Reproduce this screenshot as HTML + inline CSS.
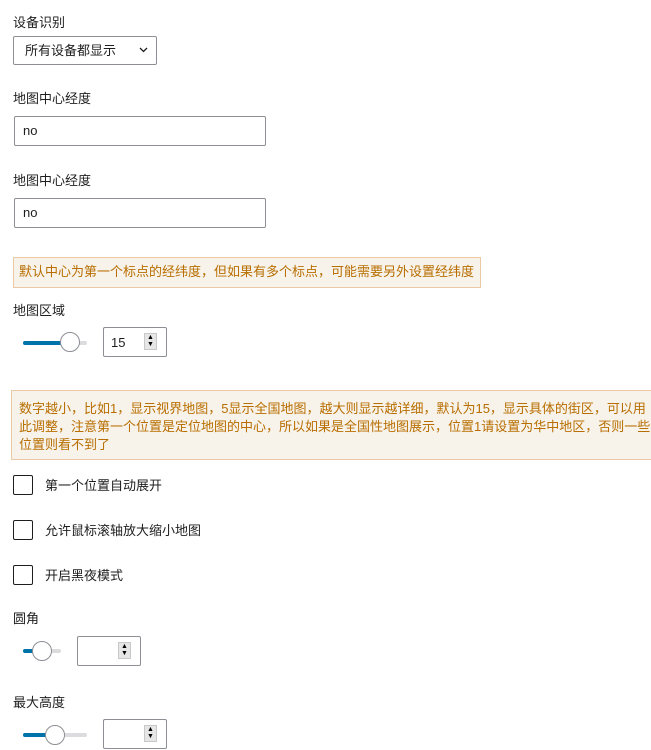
<!DOCTYPE html>
<html><head><meta charset="utf-8"><style>
body{margin:0;width:651px;height:750px;background:#fff;position:relative;overflow:hidden;font-family:"Liberation Sans","Noto Sans CJK SC",sans-serif;font-size:13px;color:#1e1e1e}
.a{position:absolute;white-space:nowrap;line-height:16px}
.box{position:absolute;border:1px solid #8c8f94;border-radius:2px;box-sizing:border-box;background:#fff}
.note{position:absolute;background:#f7f2ea;border:1px solid #ebc9a5;box-sizing:border-box;color:#b86e00;font-size:13px;line-height:18px}
.cb{position:absolute;width:20px;height:20px;border:1.5px solid #1e1e1e;border-radius:2px;box-sizing:border-box}
.track{position:absolute;height:4px;background:#dcdcde;border-radius:2px}
.fill{position:absolute;height:4px;background:#0073aa;border-radius:2px}
.thumb{position:absolute;width:20px;height:20px;border:1.5px solid #8c8f94;border-radius:50%;background:#fff;box-sizing:border-box}
.spin{position:absolute;width:13px;height:17px;background:#e6e6e6;border:1px solid #c8c8c8;box-sizing:border-box;font-size:7px;line-height:7px;text-align:center;color:#000}
</style></head><body>
<div class="a" style="left:13px;top:15px">设备识别</div>
<div class="box" style="left:13px;top:36px;width:144px;height:29px"></div>
<div class="a" style="left:25px;top:43px">所有设备都显示</div>
<svg style="position:absolute;left:139px;top:47px" width="9" height="6"><path d="M1 1 L4.5 4.5 L8 1" stroke="#1e1e1e" stroke-width="1.3" fill="none"/></svg>

<div class="a" style="left:13px;top:91px">地图中心经度</div>
<div class="box" style="left:14px;top:116px;width:252px;height:30px"></div>
<div class="a" style="left:23px;top:123px">no</div>

<div class="a" style="left:13px;top:173px">地图中心经度</div>
<div class="box" style="left:14px;top:198px;width:252px;height:30px"></div>
<div class="a" style="left:23px;top:205px">no</div>

<div class="note" style="left:13px;top:257px;width:468px;height:31px;padding:5px 0 0 5px">默认中心为第一个标点的经纬度，但如果有多个标点，可能需要另外设置经纬度</div>

<div class="a" style="left:13px;top:303px">地图区域</div>
<div class="track" style="left:23px;top:341px;width:64px"></div>
<div class="fill" style="left:23px;top:341px;width:40px"></div>
<div class="thumb" style="left:60px;top:332px"></div>
<div class="box" style="left:103px;top:327px;width:64px;height:30px"></div>
<div class="a" style="left:111px;top:335px">15</div>
<div class="spin" style="left:144px;top:333px">▲<br>▼</div>

<div class="note" style="left:11px;top:390px;width:645px;height:70px;padding:9px 0 0 7px;white-space:normal">数字越小，比如1，显示视界地图，5显示全国地图，越大则显示越详细，默认为15，显示具体的街区，可以用<br>此调整，注意第一个位置是定位地图的中心，所以如果是全国性地图展示，位置1请设置为华中地区，否则一些<br>位置则看不到了</div>

<div class="cb" style="left:13px;top:475px"></div>
<div class="a" style="left:45px;top:478px">第一个位置自动展开</div>
<div class="cb" style="left:13px;top:520px"></div>
<div class="a" style="left:45px;top:523px">允许鼠标滚轴放大缩小地图</div>
<div class="cb" style="left:13px;top:565px"></div>
<div class="a" style="left:45px;top:568px">开启黑夜模式</div>

<div class="a" style="left:13px;top:611px">圆角</div>
<div class="track" style="left:23px;top:649px;width:38px"></div>
<div class="fill" style="left:23px;top:649px;width:12px"></div>
<div class="thumb" style="left:32px;top:641px"></div>
<div class="box" style="left:77px;top:636px;width:64px;height:30px"></div>
<div class="spin" style="left:118px;top:642px">▲<br>▼</div>

<div class="a" style="left:13px;top:695px">最大高度</div>
<div class="track" style="left:23px;top:733px;width:64px"></div>
<div class="fill" style="left:23px;top:733px;width:25px"></div>
<div class="thumb" style="left:45px;top:725px"></div>
<div class="box" style="left:103px;top:719px;width:64px;height:30px"></div>
<div class="spin" style="left:144px;top:725px">▲<br>▼</div>
</body></html>
